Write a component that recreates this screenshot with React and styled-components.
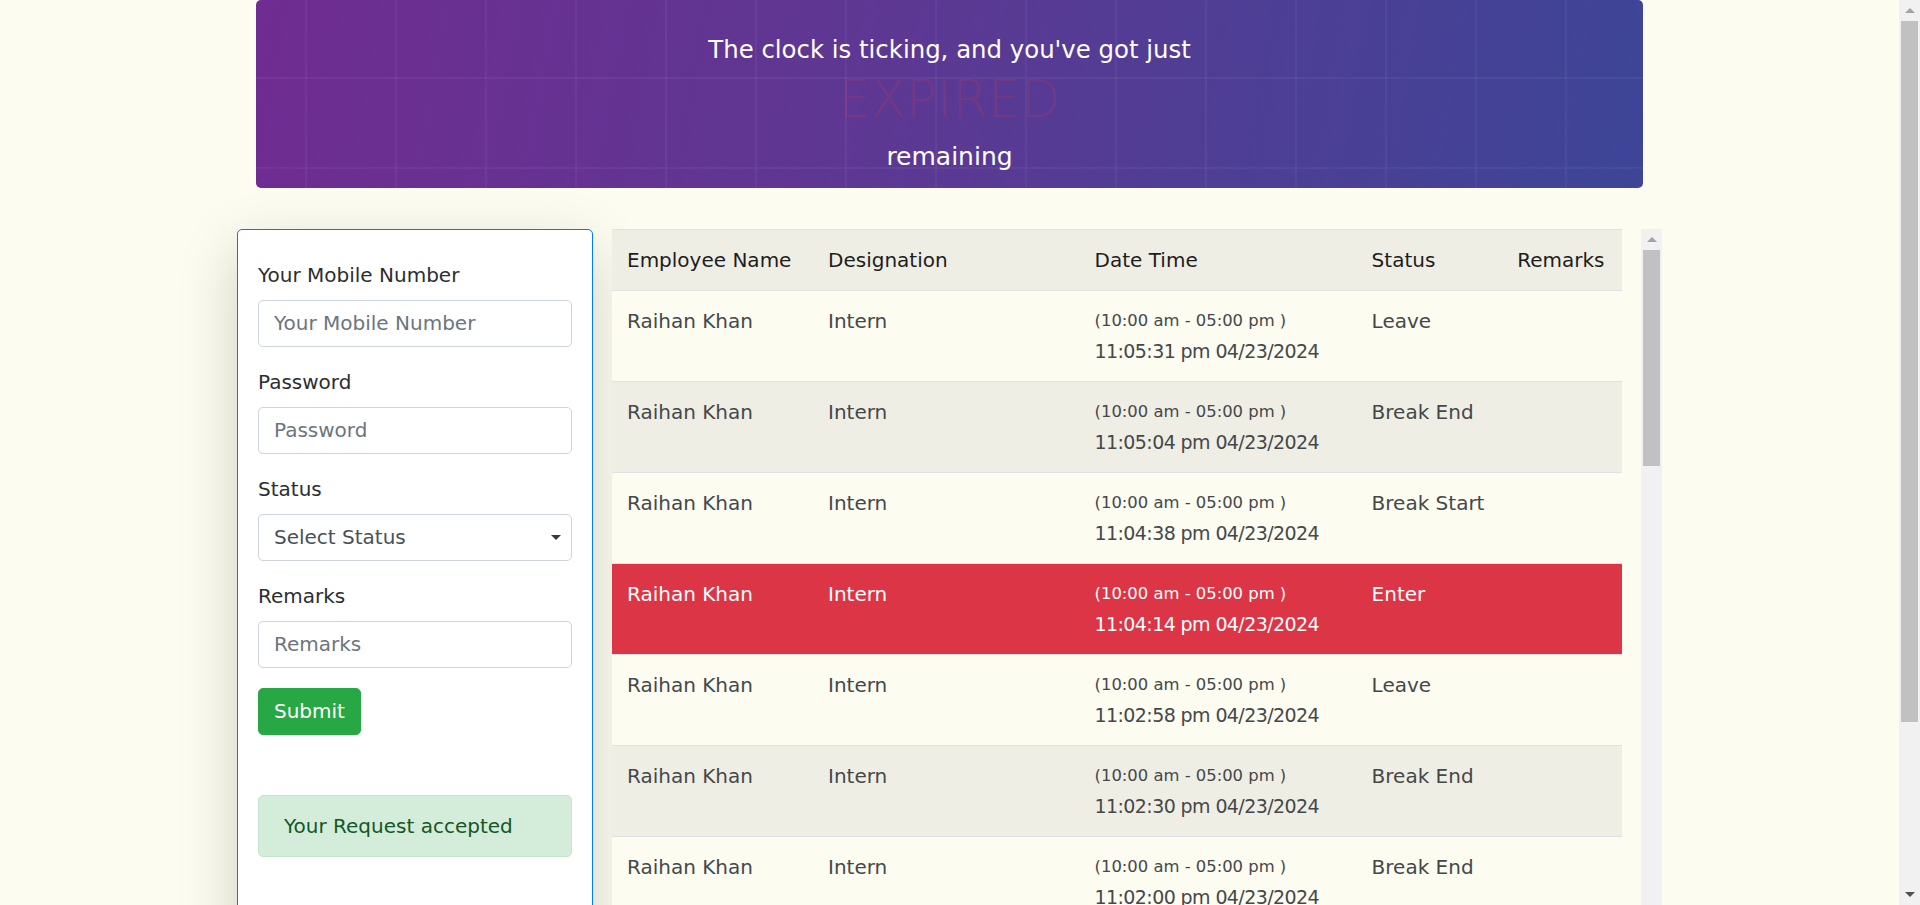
import React from 'react';
import styled, { createGlobalStyle } from 'styled-components';

const GlobalStyle = createGlobalStyle`
  html {
    background: #fcfcf0;
  }
  body {
    margin: 0;
    font-family: "DejaVu Sans", "Noto Sans", sans-serif;
    font-size: 20px;
    line-height: 1.5;
    color: #212529;
    background: #fcfcf0;
  }
  * {
    box-sizing: border-box;
  }
  ::-webkit-scrollbar {
    width: 0;
    height: 0;
  }
`;

const Shell = styled.div`
  display: flex;
  align-items: flex-start;
`;

const Content = styled.div`
  flex: 1;
  min-width: 0;
`;

// fake scrollbars (the browser's own are hidden in the shot)
const Rail = styled.div`
  flex: 0 0 21px;
  width: 21px;
  height: ${p => p.$h};
  display: flex;
  flex-direction: column;
  background: #f1f1f1;
  ${p => p.$sticky && 'position: sticky; top: 0;'}
`;

const RailButton = styled.div`
  flex: 0 0 21px;
  display: flex;
  align-items: center;
  justify-content: center;
`;

const Arrow = styled.span`
  width: 0;
  height: 0;
  border-left: 5px solid transparent;
  border-right: 5px solid transparent;
  ${p => (p.$down
    ? `border-top: 5px solid ${p.$color};`
    : `border-bottom: 5px solid ${p.$color};`)}
`;

const Thumb = styled.div`
  flex: 0 0 ${p => p.$size}px;
  margin: 0 2px;
  background: #c1c1c1;
`;

const RailGap = styled.div`
  flex: 1;
`;

const Container = styled.div`
  max-width: 1425px;
  margin: 0 auto;
  padding: 0 18.75px;
`;

const Banner = styled.div`
  height: 188px;
  border-radius: 5px;
  padding-top: 30.5px;
  display: flex;
  flex-direction: column;
  align-items: center;
  color: #fff;
  background-color: #6f2d91;
  background-image:
    linear-gradient(rgba(255, 255, 255, 0.045) 2px, transparent 2px),
    linear-gradient(90deg, rgba(255, 255, 255, 0.045) 2px, transparent 2px),
    linear-gradient(100deg, #6f2c91 0%, #5d3893 45%, #3d4597 100%);
  background-size: 90px 90px, 90px 90px, 100% 100%;
  background-position: 0 -13px, 49px 0, 0 0;
`;

const Lead = styled.div`
  font-size: 24.4px;
  line-height: 38px;
`;

const Expired = styled.div`
  font-size: 51.5px;
  line-height: 61px;
  font-weight: 200;
  color: rgba(220, 53, 69, 0.2);
`;

const Remaining = styled.div`
  font-size: 25px;
  line-height: 30px;
  margin-top: 12.5px;
`;

const Row = styled.div`
  display: flex;
  margin: 40.5px -18.75px 0;
`;

const Side = styled.div`
  flex: 0 0 25%;
  max-width: 25%;
  height: 885px;
`;

const Card = styled.div`
  height: 100%;
  background: #fff;
  border: 1px solid #007bff;
  border-radius: 5px;
  box-shadow: 0 20px 60px rgba(0, 0, 0, 0.175);
  padding: 30px 20px;
`;

const Group = styled.div`
  margin-bottom: 20px;
`;

const Label = styled.label`
  display: block;
  margin-bottom: 10px;
  font-size: 20px;
  line-height: 30px;
  color: #2b2e31;
`;

const Input = styled.input`
  display: block;
  width: 100%;
  height: 47px;
  padding: 7.5px 15px;
  font-family: inherit;
  font-size: 20px;
  line-height: 30px;
  color: #495057;
  background: #fff;
  border: 1px solid #ced4da;
  border-radius: 5px;
  outline: none;

  &::placeholder {
    color: #6c757d;
  }
`;

const SelectWrap = styled.div`
  position: relative;

  &::after {
    content: '';
    position: absolute;
    right: 11px;
    top: 50%;
    margin-top: -2px;
    border-left: 5px solid transparent;
    border-right: 5px solid transparent;
    border-top: 5px solid #343a40;
    pointer-events: none;
  }
`;

const Select = styled.select`
  display: block;
  width: 100%;
  height: 47px;
  padding: 7.5px 15px;
  font-family: inherit;
  font-size: 20px;
  line-height: 30px;
  color: #495057;
  background: #fff;
  border: 1px solid #ced4da;
  border-radius: 5px;
  appearance: none;
  outline: none;
`;

const Submit = styled.button`
  display: inline-block;
  padding: 7.5px 15px;
  font-family: inherit;
  font-size: 20px;
  line-height: 30px;
  color: #fff;
  background: #28a745;
  border: 1px solid #28a745;
  border-radius: 5px;
  cursor: pointer;
`;

const Alert = styled.div`
  margin-top: 60px;
  padding: 15px 25px;
  font-size: 20px;
  line-height: 30px;
  color: #155724;
  background: #d4edda;
  border: 1px solid #c3e6cb;
  border-radius: 5px;
`;

const Main = styled.div`
  flex: 0 0 75%;
  max-width: 75%;
  height: 885px;
  padding-left: 18.75px;
  display: flex;
`;

const TableArea = styled.div`
  flex: 1;
  min-width: 0;
  margin-right: 18.75px;
  overflow: hidden;
`;

const Table = styled.table`
  width: 100%;
  border-collapse: collapse;
  table-layout: fixed;
  background: #fcfcf0;
`;

const Th = styled.th`
  width: ${p => (p.$w ? `${p.$w}px` : 'auto')};
  padding: 15px;
  text-align: left;
  vertical-align: top;
  font-weight: 400;
  font-size: 20px;
  line-height: 30px;
  color: #1d1d1d;
  background: #efeee5;
  border-top: 1px solid #dee2e6;
  white-space: nowrap;
`;

const Tr = styled.tr`
  background: ${p => (p.$late ? '#dc3545' : p.$striped ? '#efeee5' : '#fcfcf0')};
  color: ${p => (p.$late ? '#fff' : '#45484b')};
`;

const Td = styled.td`
  padding: 15px;
  vertical-align: top;
  font-size: 20px;
  line-height: 30px;
  border-top: 1px solid #dee2e6;
  white-space: nowrap;
`;

const Shift = styled.span`
  display: block;
  font-size: 16.4px;
  line-height: 30px;
`;

const Stamp = styled.span`
  display: block;
  font-size: 19px;
  line-height: 30px;
  letter-spacing: -0.6px;
`;

const records = [
  { time: '11:05:31 pm', status: 'Leave' },
  { time: '11:05:04 pm', status: 'Break End' },
  { time: '11:04:38 pm', status: 'Break Start' },
  { time: '11:04:14 pm', status: 'Enter', late: true },
  { time: '11:02:58 pm', status: 'Leave' },
  { time: '11:02:30 pm', status: 'Break End' },
  { time: '11:02:00 pm', status: 'Break End' },
  { time: '11:01:36 pm', status: 'Break Start' },
  { time: '11:01:09 pm', status: 'Enter' },
  { time: '10:59:47 pm', status: 'Leave' },
];

const App = () => {
  return (
    <>
      <GlobalStyle />
      <Shell>
        <Content>
          <Container>
            <Banner>
              <Lead>The clock is ticking, and you've got just</Lead>
              <Expired>EXPIRED</Expired>
              <Remaining>remaining</Remaining>
            </Banner>
            <Row>
              <Side>
                <Card>
                  <Group>
                    <Label>Your Mobile Number</Label>
                    <Input type="text" placeholder="Your Mobile Number" />
                  </Group>
                  <Group>
                    <Label>Password</Label>
                    <Input type="password" placeholder="Password" />
                  </Group>
                  <Group>
                    <Label>Status</Label>
                    <SelectWrap>
                      <Select defaultValue="">
                        <option value="">Select Status</option>
                        <option>Enter</option>
                        <option>Break Start</option>
                        <option>Break End</option>
                        <option>Leave</option>
                      </Select>
                    </SelectWrap>
                  </Group>
                  <Group>
                    <Label>Remarks</Label>
                    <Input type="text" placeholder="Remarks" />
                  </Group>
                  <Submit>Submit</Submit>
                  <Alert>Your Request accepted</Alert>
                </Card>
              </Side>
              <Main>
                <TableArea>
                  <Table>
                    <thead>
                      <tr>
                        <Th $w={201}>Employee Name</Th>
                        <Th $w={266.6}>Designation</Th>
                        <Th $w={277}>Date Time</Th>
                        <Th $w={145.6}>Status</Th>
                        <Th>Remarks</Th>
                      </tr>
                    </thead>
                    <tbody>
                      {records.map((r, i) => (
                        <Tr key={i} $striped={i % 2 === 1} $late={r.late}>
                          <Td>Raihan Khan</Td>
                          <Td>Intern</Td>
                          <Td>
                            <Shift>(10:00 am - 05:00 pm )</Shift>
                            <Stamp>{r.time} 04/23/2024</Stamp>
                          </Td>
                          <Td>{r.status}</Td>
                          <Td></Td>
                        </Tr>
                      ))}
                    </tbody>
                  </Table>
                </TableArea>
                <Rail $h="885px">
                  <RailButton><Arrow $color="#a3a3a3" /></RailButton>
                  <Thumb $size={216} />
                  <RailGap />
                  <RailButton><Arrow $down $color="#505050" /></RailButton>
                </Rail>
              </Main>
            </Row>
          </Container>
        </Content>
        <Rail $h="100vh" $sticky>
          <RailButton><Arrow $color="#a3a3a3" /></RailButton>
          <Thumb $size={701} />
          <RailGap />
          <RailButton><Arrow $down $color="#505050" /></RailButton>
        </Rail>
      </Shell>
    </>
  );
};

export default App;
